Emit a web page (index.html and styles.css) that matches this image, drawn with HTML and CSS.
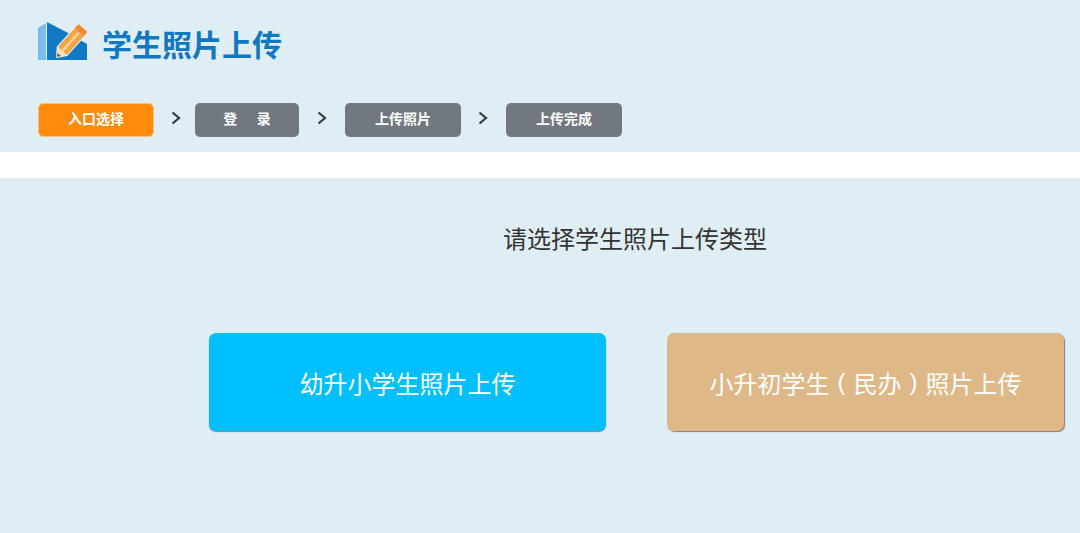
FILE: index.html
```html
<!DOCTYPE html>
<html lang="zh-CN">
<head>
    <meta charset="UTF-8">
    <meta name="viewport" content="width=device-width, initial-scale=1.0">
    <title>学生照片上传</title>
    <link rel="stylesheet" href="styles.css">
</head>
<body>
    <div class="header">
        <div class="brand">
            <svg class="logo" width="49" height="39" viewBox="0 0 49 39">
                <path d="M0 6 L8 1 V38 H0 Z" fill="#7dbdea"/>
                <path d="M9 0 L32 12 L49 22 V38 H9 Z" fill="#1079c4"/>
                <path d="M19 35 L19.800 25 L40.500 2 L49.500 10 L28.800 33 Z" fill="#e8f2f8" stroke="#e8f2f8" stroke-width="2" stroke-linejoin="round"/>
                <path d="M19.800 25 L36.500 6.500 L45.500 14.500 L28.800 33 Z" fill="#f2a544"/>
                <path d="M24.300 29 L41 10.500" stroke="#fad39a" stroke-width="2.500"/>
                <path d="M36.500 6.500 L40.500 2 L49.500 10 L45.500 14.500 Z" fill="#ec8d2e"/>
                <path d="M19 35 L19.800 25 L28.800 33 Z" fill="#f9dcb4"/>
                <path d="M19 35 L19.300 31 L23 34 Z" fill="#6b5a45"/>
            </svg>
            <h1>学生照片上传</h1>
        </div>
        <div class="steps">
            <span class="step step-current">入口选择</span>
            <svg class="arrow arrow-first" width="10" height="14" viewBox="0 0 10 14"><path d="M1.500 1.500 L8 7 L1.500 12.500" fill="none" stroke="#2f3d48" stroke-width="2.200"/></svg>
            <span class="step step-login">登&nbsp;&nbsp;&nbsp;&nbsp;&nbsp;录</span>
            <svg class="arrow" width="10" height="14" viewBox="0 0 10 14"><path d="M1.500 1.500 L8 7 L1.500 12.500" fill="none" stroke="#2f3d48" stroke-width="2.200"/></svg>
            <span class="step">上传照片</span>
            <svg class="arrow arrow-last" width="10" height="14" viewBox="0 0 10 14"><path d="M1.500 1.500 L8 7 L1.500 12.500" fill="none" stroke="#2f3d48" stroke-width="2.200"/></svg>
            <span class="step">上传完成</span>
        </div>
    </div>
    <div class="main">
        <h2>请选择学生照片上传类型</h2>
        <div class="choices">
            <a class="choice choice-primary" href="#">幼升小学生照片上传</a>
            <a class="choice choice-private" href="#">小升初学生<span class="paren">(</span>民办<span class="paren">)</span>照片上传</a>
        </div>
    </div>
</body>
</html>
```

FILE: styles.css
```css
* {
    margin: 0;
    padding: 0;
    box-sizing: border-box;
    font-family: "Liberation Sans", "Noto Sans CJK SC", sans-serif;
}

html, body {
    height: 100%;
    overflow: hidden;
}

body {
    background-color: #fff;
}

.header {
    height: 152px;
    padding: 22px 0 0 38px;
    background-color: #dfedf5;
}

.brand {
    display: flex;
    align-items: center;
    gap: 15px;
    height: 39px;
}

.logo {
    overflow: visible;
}

h1 {
    color: #0f78c0;
    font-size: 30px;
    font-weight: 700;
    padding-top: 2px;
}

.steps {
    display: flex;
    align-items: center;
    margin-top: 42px;
}

.step {
    width: 116px;
    height: 34px;
    line-height: 33px;
    text-align: center;
    background: #72787f;
    border-radius: 5px;
    color: #fff;
    font-size: 14px;
    font-weight: 700;
}

.step-current {
    background: #ff8b0a;
    border: 1px solid #fcc27e;
    line-height: 31px;
}

.step-login {
    width: 104px;
}

.arrow {
    margin: -4px 18px 0;
    flex-shrink: 0;
}

.arrow-first {
    margin-left: 17px;
    margin-right: 14px;
}

.arrow-last {
    margin-left: 17px;
}

.main {
    margin-top: 26px;
    height: 355px;
    background-color: #dfedf5;
    padding-top: 46px;
}

h2 {
    color: #333;
    font-size: 24px;
    font-weight: 400;
    line-height: 32px;
    padding-left: 503px;
}

.choices {
    display: flex;
    gap: 61px;
    margin-top: 77px;
    padding-left: 209px;
}

.choice {
    display: flex;
    align-items: center;
    justify-content: center;
    width: 397px;
    height: 98px;
    border-radius: 7px;
    color: #fff;
    font-size: 24px;
    text-decoration: none;
}

.paren {
    width: 24px;
    text-align: center;
}

.choice-primary {
    background: #00bfff;
    box-shadow: 0 1px 1px #5e93ad;
}

.choice-private {
    background: #deb887;
    box-shadow: 1px 1px 1px #8a8070;
}
```
